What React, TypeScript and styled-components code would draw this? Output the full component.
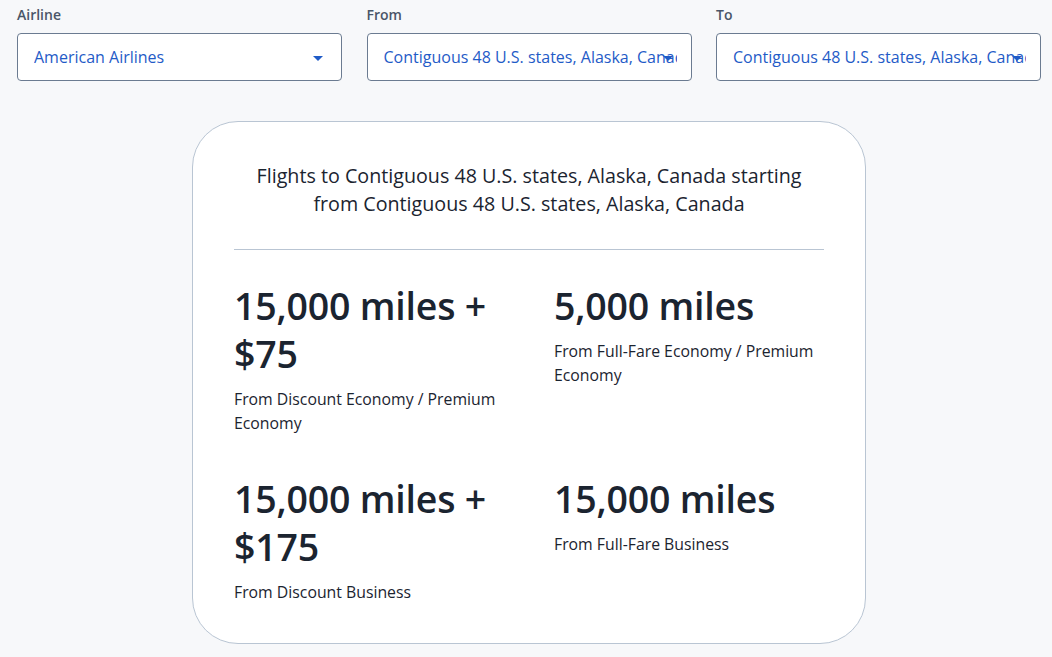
import React from "react";
import styled, { createGlobalStyle } from "styled-components";

const GlobalStyle = createGlobalStyle`
  html, body {
    margin: 0;
    padding: 0;
    background: #f7f8fa;
    font-family: "Open Sans", "Noto Sans", Arial, sans-serif;
    color: #1b2430;
  }
  * { box-sizing: border-box; }
`;

const Page = styled.div`
  padding: 6px 11px 0 17px;
  min-height: 657px;
`;

const Filters = styled.div`
  display: grid;
  grid-template-columns: repeat(3, 1fr);
  column-gap: 24.5px;
`;

const Field = styled.div`
  display: flex;
  flex-direction: column;
  min-width: 0;
`;

const Label = styled.div`
  font-size: 14px;
  line-height: 18px;
  font-weight: 600;
  color: #4a5568;
  margin-bottom: 9px;
`;

const SelectBox = styled.div`
  position: relative;
  height: 48px;
  background: #fff;
  border: 1px solid #6b7b91;
  border-radius: 4px;
  display: flex;
  align-items: center;
  padding: 0 14px 0 16px;
  overflow: hidden;
`;

const SelectText = styled.span`
  font-size: 16px;
  color: #1f5bc7;
  white-space: nowrap;
  overflow: hidden;
  flex: 1;
`;

const Caret = styled.span`
  position: absolute;
  right: 18px;
  top: 22px;
  width: 0;
  height: 0;
  border-left: 5px solid transparent;
  border-right: 5px solid transparent;
  border-top: 5px solid #1f5bc7;
`;

const Card = styled.div`
  width: 674px;
  margin: 40px auto 0;
  background: #fff;
  border: 1px solid #b9c5d3;
  border-radius: 46px;
  padding: 40px 41px 39px;
`;

const Title = styled.h2`
  margin: 0;
  text-align: center;
  font-size: 19.7px;
  line-height: 28px;
  font-weight: 400;
  color: #1b2430;
  padding: 0 20px;
`;

const Divider = styled.hr`
  margin: 31px 0 32px;
  border: 0;
  border-top: 1px solid #b9c5d3;
`;

const Grid = styled.div`
  display: grid;
  grid-template-columns: 300px 272px;
  column-gap: 20px;
  row-gap: 40px;
`;

const Fare = styled.div`
  display: flex;
  flex-direction: column;
`;

const Amount = styled.div`
  font-size: 37.5px;
  line-height: 48px;
  font-weight: 600;
  color: #1b2430;
  letter-spacing: -0.2px;
  margin-bottom: 9px;
`;

const FareClass = styled.div`
  font-size: 15.8px;
  line-height: 24px;
  color: #1b2430;
`;

const fields = [
  { label: "Airline", value: "American Airlines" },
  { label: "From", value: "Contiguous 48 U.S. states, Alaska, Canada" },
  { label: "To", value: "Contiguous 48 U.S. states, Alaska, Canada" },
];

const fares = [
  { amount: "15,000 miles + $75", cls: "From Discount Economy / Premium Economy" },
  { amount: "5,000 miles", cls: "From Full-Fare Economy / Premium Economy" },
  { amount: "15,000 miles + $175", cls: "From Discount Business" },
  { amount: "15,000 miles", cls: "From Full-Fare Business" },
];

export default function App() {
  return (
    <>
      <GlobalStyle />
      <Page>
        <Filters>
          {fields.map((f) => (
            <Field key={f.label}>
              <Label>{f.label}</Label>
              <SelectBox>
                <SelectText>{f.value}</SelectText>
                <Caret />
              </SelectBox>
            </Field>
          ))}
        </Filters>
        <Card>
          <Title>
            Flights to Contiguous 48 U.S. states, Alaska, Canada starting from
            Contiguous 48 U.S. states, Alaska, Canada
          </Title>
          <Divider />
          <Grid>
            {fares.map((f) => (
              <Fare key={f.amount}>
                <Amount>{f.amount}</Amount>
                <FareClass>{f.cls}</FareClass>
              </Fare>
            ))}
          </Grid>
        </Card>
      </Page>
    </>
  );
}
